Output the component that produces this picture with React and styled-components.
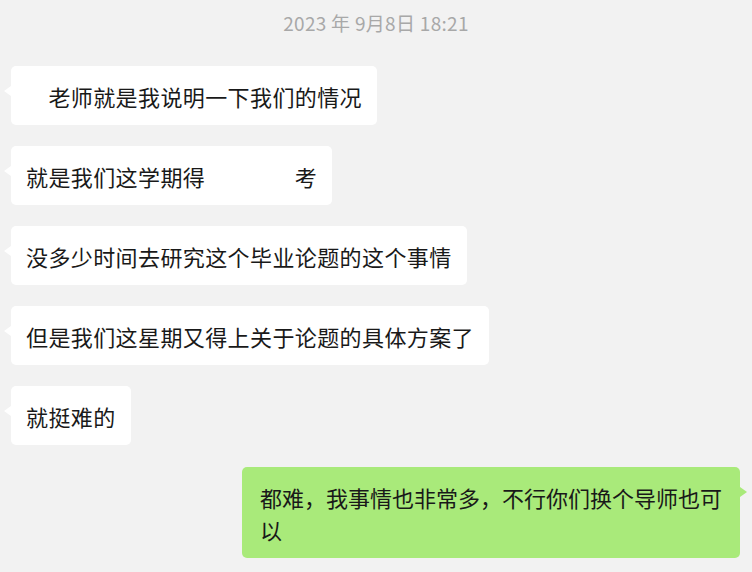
import React from "react";
import styled, { createGlobalStyle } from "styled-components";

const messages = [
  { from: "them", text: "\u2003老师就是我说明一下我们的情况" },
  { from: "them", text: "就是我们这学期得\u3000\u3000\u3000\u3000考" },
  { from: "them", text: "没多少时间去研究这个毕业论题的这个事情" },
  { from: "them", text: "但是我们这星期又得上关于论题的具体方案了" },
  { from: "them", text: "就挺难的" },
  { from: "me", text: "都难，我事情也非常多，不行你们换个导师也可以" }
];

const GlobalStyle = createGlobalStyle`
  html, body {
    margin: 0;
    padding: 0;
    background: #f2f2f2;
  }
  body {
    font-family: "PingFang SC", "Noto Sans CJK SC", "Noto Sans", sans-serif;
  }
`;

const App = () => {
  return (
    <>
      <GlobalStyle />
      <Chat>
        <Time>2023 年 9月8日 18:21</Time>
        <List>
          {messages.map((m, i) => (
            <Row key={i} mine={m.from === "me"}>
              <Bubble mine={m.from === "me"}>{m.text}</Bubble>
            </Row>
          ))}
        </List>
      </Chat>
    </>
  );
};

const Chat = styled.div`
  width: 752px;
  height: 572px;
  box-sizing: border-box;
  padding-top: 11px;
  overflow: hidden;
`;

const Time = styled.div`
  text-align: center;
  color: #a8a8a8;
  font-size: 19px;
  letter-spacing: 0.3px;
  line-height: 24px;
  margin-bottom: 31px;
`;

const List = styled.div`
  display: flex;
  flex-direction: column;
  gap: 21px;
`;

const Row = styled.div`
  display: flex;
  justify-content: ${p => (p.mine ? "flex-end" : "flex-start")};
  padding: ${p => (p.mine ? "1px 12px 0 0" : "0 0 0 11px")};
`;

const Bubble = styled.div`
  position: relative;
  box-sizing: border-box;
  max-width: 498px;
  padding: ${p => (p.mine ? "13.5px 18px" : "13.5px 15px")};
  background: ${p => (p.mine ? "#a9ea7a" : "#ffffff")};
  border-radius: 5px;
  color: #191919;
  font-size: 22px;
  letter-spacing: ${p => (p.mine ? "0" : "0.4px")};
  line-height: 32px;
  white-space: pre-wrap;

  &::before {
    content: "";
    position: absolute;
    top: 20px;
    ${p => (p.mine ? "right: -7px;" : "left: -7px;")}
    border-top: 5px solid transparent;
    border-bottom: 5px solid transparent;
    ${p =>
      p.mine
        ? "border-left: 7px solid #a9ea7a;"
        : "border-right: 7px solid #ffffff;"}
  }
`;

export default App;
